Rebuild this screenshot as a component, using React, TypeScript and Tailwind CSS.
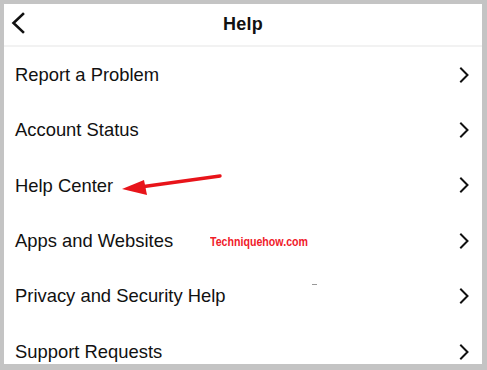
const items = [
  'Report a Problem',
  'Account Status',
  'Help Center',
  'Apps and Websites',
  'Privacy and Security Help',
  'Support Requests',
]

function ChevronRight() {
  return (
    <svg width="12" height="16" viewBox="0 0 12 16" fill="none">
      <path d="M3 1.5 L9.5 8 L3 14.5" stroke="#111" strokeWidth="2" strokeLinecap="square" />
    </svg>
  )
}

export default function App() {
  return (
    <div
      className="w-[487px] h-[370px] bg-[#c4c4c4] pt-[4px] pl-[4px] pr-[5px] pb-[6px]"
      style={{ fontFamily: '"Liberation Sans", Arial, sans-serif' }}
    >
      <div className="relative h-full bg-white overflow-hidden flex flex-col">
        {/* Header */}
        <div className="relative h-[41px] shrink-0 flex items-center justify-center">
          <svg className="absolute left-[6px] top-[8px]" width="16" height="22" viewBox="0 0 16 22" fill="none">
            <path d="M13 2 L3.5 11 L13 20" stroke="#111" strokeWidth="2.6" strokeLinecap="square" />
          </svg>
          <span className="text-[18px] font-semibold text-[#111] tracking-[0.2px]">Help</span>
        </div>
        <div className="h-[2px] shrink-0 bg-[#f2f2f2]" />

        {items.map((label) => (
          <div key={label} className="h-[55.4px] shrink-0 flex items-center justify-between pl-[11px] pr-[12px]">
            <span className="text-[18.4px] text-[#111]">{label}</span>
            <ChevronRight />
          </div>
        ))}

        {/* Red annotation arrow */}
        <svg className="absolute left-[110px] top-[160px]" width="110" height="34" viewBox="0 0 110 34" fill="none">
          <path d="M106 12 L30 22.5" stroke="#e8141a" strokeWidth="3.4" strokeLinecap="round" />
          <polygon points="8,25 30,16 33,31" fill="#e8141a" />
        </svg>

        {/* watermark */}
        <span className="absolute left-[206px] top-[229px] text-[12.5px] font-bold text-[#f0202a] scale-x-[0.85] origin-left whitespace-nowrap">
          Techniquehow.com
        </span>
        <span className="absolute left-[308px] top-[280px] w-[5px] h-[1px] bg-[#999]" />
      </div>
    </div>
  )
}
